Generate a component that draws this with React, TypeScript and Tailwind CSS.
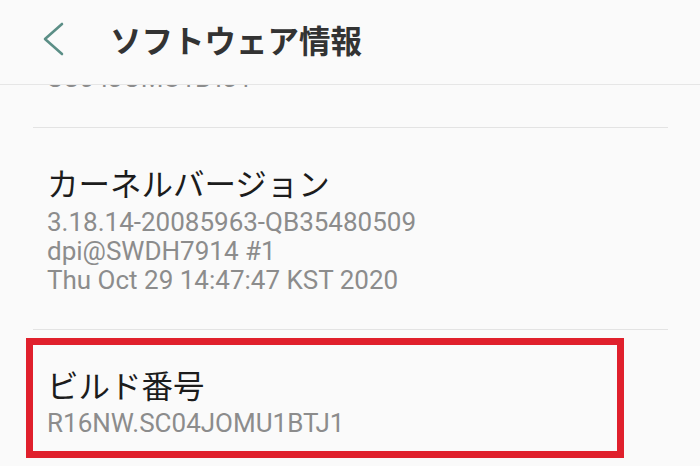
import React from 'react';

const jp = "font-['Noto_Sans_CJK_JP',sans-serif]";
const num = "font-['Roboto','Noto_Sans_CJK_JP',sans-serif]";

function Divider() {
  return <div className="ml-[33px] h-px w-[635px] bg-[#e3e3e3]" />;
}

export default function App() {
  return (
    <div className="relative h-[466px] w-[700px] overflow-hidden bg-[#fafafa]">
      {/* Header */}
      <div className="relative z-10 flex h-[85px] items-center border-b border-[#e6e6e6] bg-[#fafafa] pb-[6px]">
        <svg className="ml-[40px] h-[36px] w-[28px]" viewBox="0 0 28 36" fill="none">
          <path d="M22 3 L5 18 L22 33" stroke="#5b8e86" strokeWidth="2.6" strokeLinecap="round" strokeLinejoin="round" />
        </svg>
        <h1 className={`${jp} ml-[42px] text-[31.5px] font-bold leading-[40px] text-[#333333]`}>ソフトウェア情報</h1>
      </div>

      {/* List */}
      <div className="-mt-[21px]">
        <div className={`${num} pl-[47px] text-[26px] leading-[29px] text-[#8c8c8c]`}>SC04JOMU1BTJ1</div>
        <div className="mt-[34px]">
          <Divider />
        </div>

        <div className="pl-[47px] pt-[34px] pb-[34px]">
          <div className={`${jp} text-[31.5px] leading-[40px] text-[#1c1c1c]`}>カーネルバージョン</div>
          <div className={`${num} mt-[6px] text-[26px] leading-[29px] text-[#8c8c8c]`}>
            <div>3.18.14-20085963-QB35480509</div>
            <div>dpi@SWDH7914 #1</div>
            <div>Thu Oct 29 14:47:47 KST 2020</div>
          </div>
        </div>
        <Divider />

        <div className="ml-[26px] mt-[8px] w-[598px] border-[7px] border-[#e0202c] pl-[14px] pt-[19px] pb-[13px]">
          <div className={`${jp} text-[31.5px] leading-[40px] text-[#1c1c1c]`}>ビルド番号</div>
          <div className={`${num} mt-[5px] text-[26px] leading-[29px] text-[#8c8c8c]`}>R16NW.SC04JOMU1BTJ1</div>
        </div>
      </div>
    </div>
  );
}
